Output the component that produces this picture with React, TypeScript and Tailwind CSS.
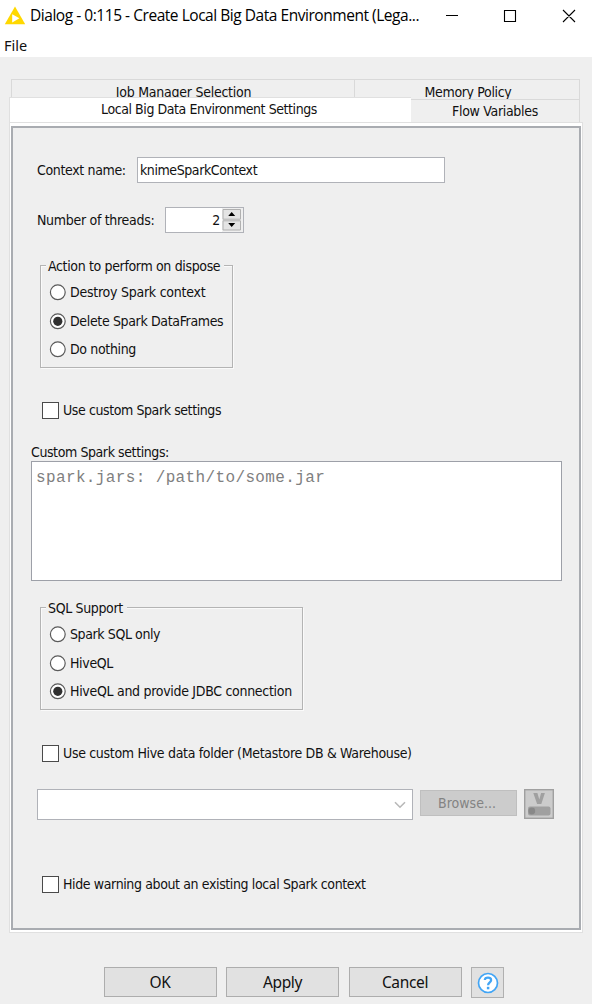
import React from 'react';

function Radio({ label, checked, className }: { label: string; checked?: boolean; className?: string }) {
  return (
    <div className="flex h-[17px] items-center gap-[4px]">
      <svg width="17" height="17" viewBox="0 0 17 17" className="shrink-0">
        <circle cx="8.8" cy="8.3" r="7.4" fill="#fff" stroke="#5a5a5a" strokeWidth="1.2" />
        {checked && <circle cx="8.8" cy="8.3" r="4.6" fill="#303030" />}
      </svg>
      <span className={className}>{label}</span>
    </div>
  );
}

function Check({ label, className }: { label: string; className?: string }) {
  return (
    <div className="ml-[29px] flex h-[17px] items-center gap-[4px]">
      <span className="size-[17px] shrink-0 border border-[#4a4a4a] bg-white" />
      <span className={className}>{label}</span>
    </div>
  );
}

function Group({ title, box, legend, children }: { title: string; box: string; legend: string; children: React.ReactNode }) {
  return (
    <div className={`ml-[27px] h-[103px] border border-[#b4b4b4] shadow-[1px_1px_0_#fafafa,inset_1px_1px_0_#fafafa] ${box}`}>
      <div className={`relative -top-[9px] ml-[5px] h-[18px] bg-[#efefef] pl-[2px] leading-[18px] ${legend}`}>{title}</div>
      <div className="ml-[8px] flex flex-col gap-[11.7px]">{children}</div>
    </div>
  );
}

const button = "flex h-[30px] w-[113px] items-center justify-center border border-[#adadad] bg-[#e1e1e1] font-['Noto_Sans',sans-serif] text-[15.5px] [font-stretch:normal]";

export default function App() {
  return (
    <div className="flex h-[1004px] w-[592px] flex-col overflow-hidden whitespace-nowrap bg-[#efefef] font-['DejaVu_Sans_Condensed','DejaVu_Sans',sans-serif] text-[14px] leading-[17px] tracking-[-0.35px] text-[#111] [font-stretch:condensed]">
      <header className="flex h-[31px] shrink-0 items-center bg-white font-['Open_Sans',sans-serif] text-[15.5px] text-black [font-stretch:normal]">
        <svg width="22" height="20" viewBox="0 0 22 20" className="ml-[4px] shrink-0">
          <path d="M11 0.5 21.2 18.2H0.8Z" fill="#ffd800" />
          <path d="M8.2 8.2v8.2l7.2-4.1Z" fill="#fff" />
        </svg>
        <span className="ml-[4px] w-[412px] tracking-[-0.46px]">Dialog - 0:115 - Create Local Big Data Environment (Lega...</span>
        <svg width="132" height="14" viewBox="0 0 132 14" fill="none" stroke="#000" strokeWidth="1.1" className="ml-[3px]">
          <path d="M1 6.5H13M59.5 1.5h11v11h-11ZM118 1l12 12M130 1 118 13" />
        </svg>
      </header>
      <div className="flex h-[26px] shrink-0 items-center bg-white pl-[4px] pt-[3px] font-['Noto_Sans',sans-serif] text-[14.5px] tracking-[0px] [font-stretch:normal]">File</div>

      <div className="ml-[9px] mt-[22px] flex w-[574px] shrink-0 flex-col">
        <div className="ml-[2px] flex h-[18px] w-[569px]">
          <div className="flex h-[18px] w-[343px] justify-center overflow-hidden border-l border-t border-[#d9d9d9] pl-px pt-[4px] tracking-[-0.25px]">Job Manager Selection</div>
          <div className="flex h-[20px] w-[226px] justify-center border-x border-t border-[#d9d9d9] pl-[2px] pt-[4px]">Memory Policy</div>
        </div>
        <div className="flex h-[26px]">
          <div className="flex w-[402px] justify-center border-l border-t border-[#e0e0e0] bg-white pr-[3px] pt-[3px] tracking-[-0.43px]">Local Big Data Environment Settings</div>
          <div className="mt-[2px] flex h-[24px] w-[169px] justify-center border-b border-r border-t border-[#d9d9d9] pt-[3px] tracking-[-0.3px]">Flow Variables</div>
        </div>

        <div className="-mt-px h-[811px] border border-[#e0e0e0] bg-white px-px pb-[2px] pt-[3px]">
          <div className="flex h-[804px] flex-col border-2 border-[#a9acb1] bg-[#efefef]">
            <div className="ml-[24px] mt-[29px] flex h-[26px] items-center">
              <span className="w-[100px]">Context name:</span>
              <span className="flex h-[26px] w-[308px] items-center border border-[#b0b2b8] bg-white pl-[2px] tracking-[-0.42px]">knimeSparkContext</span>
            </div>
            <div className="ml-[24px] mt-[24px] flex h-[26px] items-center">
              <span className="w-[128px] tracking-[-0.3px]">Number of threads:</span>
              <span className="flex h-[26px] w-[79px] items-center border border-[#b0b2b8] bg-white">
                <span className="w-[56px] pr-[2px] text-right">2</span>
                <svg width="21" height="24" viewBox="0 0 21 24">
                  <path d="M0 0H21V24H0Z" fill="#efefef" />
                  <path d="M1 1.5H18.5V11.2H1ZM1 12.8H18.5V22H1Z" fill="#e4e4e4" stroke="#b0b0b0" />
                  <path d="M6.2 8h7L9.7 4ZM6.2 15h7L9.7 19Z" fill="#000" />
                </svg>
              </span>
            </div>
            <div className="h-[32px]" />
            <Group title="Action to perform on dispose" box="w-[193px]" legend="w-[178px]">
              <Radio label="Destroy Spark context" className="tracking-[-0.25px]" />
              <Radio label="Delete Spark DataFrames" checked />
              <Radio label="Do nothing" />
            </Group>
            <div className="h-[34px]" />
            <Check label="Use custom Spark settings" className="tracking-[-0.41px]" />
            <div className="ml-[18px] mt-[25px] h-[17px] tracking-[-0.41px]">Custom Spark settings:</div>
            <div className="ml-[18px] h-[120px] w-[531px] border border-[#9da0a8] bg-white pl-[4px] pt-[8px] font-['Courier_New','Liberation_Mono',monospace] text-[16px] tracking-[0.37px] text-[#808080]">spark.jars: /path/to/some.jar</div>
            <div className="h-[26px]" />
            <Group title="SQL Support" box="w-[263px]" legend="w-[81px]">
              <Radio label="Spark SQL only" className="tracking-[-0.4px]" />
              <Radio label="HiveQL" />
              <Radio label="HiveQL and provide JDBC connection" checked className="tracking-[-0.3px]" />
            </Group>
            <div className="h-[35px]" />
            <Check label="Use custom Hive data folder (Metastore DB & Warehouse)" className="tracking-[-0.32px]" />
            <div className="ml-[24px] mt-[27px] flex h-[31px] items-start">
              <div className="flex h-[31px] w-[376px] items-center justify-end border border-[#b0b2b8] bg-white pr-[6px]">
                <svg width="12" height="8" viewBox="0 0 12 8" fill="none" stroke="#b8b8b8" strokeWidth="1.6"><path d="m1 1.2 5 5 5-5" /></svg>
              </div>
              <div className="ml-[7px] mt-px flex h-[26px] w-[97px] items-center justify-center border border-[#bfbfbf] bg-[#cccccc] pr-[3px] tracking-[0px] text-[#838383]">Browse...</div>
              <svg width="30" height="30" viewBox="0 0 30 30" className="ml-[7px]">
                <rect x="0.7" y="0.7" width="28.6" height="28.6" fill="#ccc" stroke="#a0a0a0" strokeWidth="1.4" />
                <path d="M9.3 4h4.1l1.9 6.5L17.1 4h3.8l-3.6 11h-4.2Z" fill="#a0a0a0" />
                <rect x="4" y="17.5" width="22.5" height="9" rx="2" fill="#a0a0a0" />
                <circle cx="7.8" cy="22" r="3.4" fill="#888" />
              </svg>
            </div>
            <div className="h-[56px]" />
            <Check label="Hide warning about an existing local Spark context" className="tracking-[-0.38px]" />
          </div>
        </div>
      </div>

      <footer className="ml-[103.5px] mt-[34px] flex items-start gap-[9.5px]">
        <button className={button}>OK</button>
        <button className={button}>Apply</button>
        <button className={button}>Cancel</button>
        <button className="flex h-[31px] w-[33px] items-center justify-center border border-[#b0b0b0] bg-[#e1e1e1]">
          <svg width="22" height="22" viewBox="0 0 22 22" fill="none" stroke="#42a5f5">
            <circle cx="11" cy="11" r="9.5" fill="#fff" strokeWidth="1.7" />
            <path d="M7.8 8c.3-3.3 6.6-3.2 6.3.2-.1 2.2-3 2.1-3 5" strokeWidth="2.3" />
            <path d="M11.1 14.8v2.5" strokeWidth="2.5" />
          </svg>
        </button>
      </footer>
    </div>
  );
}
